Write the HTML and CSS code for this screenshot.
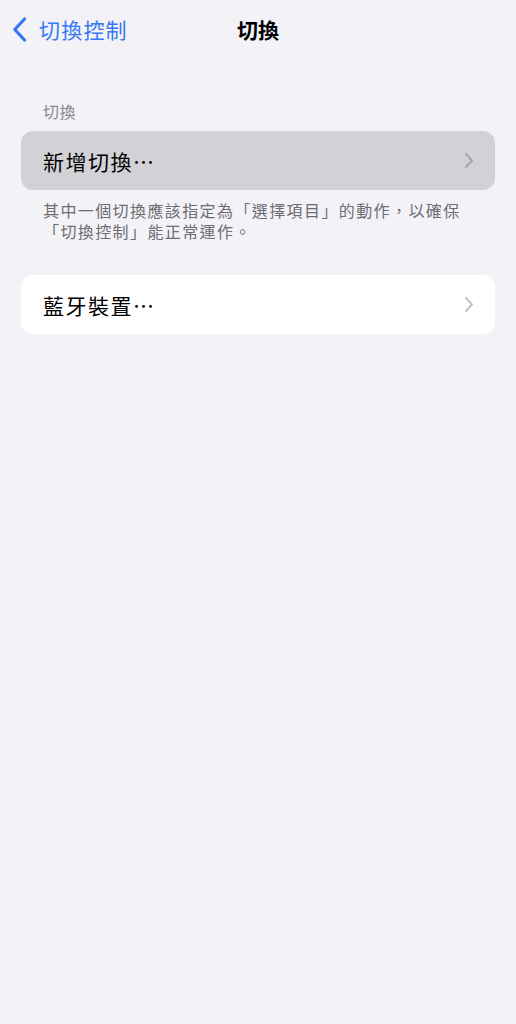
FILE: index.html
```html
<!DOCTYPE html>
<html lang="zh-Hant">
<head>
<meta charset="utf-8">
<link rel="stylesheet" href="styles.css">
</head>
<body>
<div class="screen">
  <header class="nav">
    <div class="back">
      <svg class="back-icon" width="15" height="25" viewBox="0 0 15 25"><path d="M12.5 2 L2.8 12.5 L12.5 23" fill="none" stroke="#3478f6" stroke-width="3.2" stroke-linecap="round" stroke-linejoin="round"/></svg>
      <span class="back-label">切換控制</span>
    </div>
    <div class="title">切換</div>
  </header>

  <section class="group first">
    <div class="group-header">切換</div>
    <div class="card highlighted">
      <div class="row">
        <span class="row-label">新增切換⋯</span>
        <svg class="chev" width="10" height="17" viewBox="0 0 10 17"><path d="M2 2 L8 8.5 L2 15" fill="none" stroke="#a8a8ad" stroke-width="2.2" stroke-linecap="round" stroke-linejoin="round"/></svg>
      </div>
    </div>
    <div class="group-footer">其中一個切換應該指定為「選擇項目」的動作，以確保「切換控制」能正常運作。</div>
  </section>

  <section class="group second">
    <div class="card">
      <div class="row">
        <span class="row-label">藍牙裝置⋯</span>
        <svg class="chev" width="10" height="17" viewBox="0 0 10 17"><path d="M2 2 L8 8.5 L2 15" fill="none" stroke="#c4c4c7" stroke-width="2.2" stroke-linecap="round" stroke-linejoin="round"/></svg>
      </div>
    </div>
  </section>
</div>
</body>
</html>
```

FILE: styles.css
```css
* { box-sizing: border-box; }
html, body { margin: 0; padding: 0; }
body {
  background: #f2f2f7;
  font-family: "Noto Sans CJK TC", "Noto Sans CJK SC", "Noto Sans", sans-serif;
  width: 516px;
  height: 1024px;
}
.screen { padding: 0 21px; }
.nav {
  position: relative;
  height: 58px;
  display: flex;
  align-items: center;
}
.back {
  display: flex;
  align-items: center;
  gap: 12px;
  margin-left: -9px;
  color: #3478f6;
}
.back-icon { display: block; }
.back-label { font-size: 21px; line-height: 1; letter-spacing: 1.2px; }
.title {
  position: absolute;
  left: 0; right: 0;
  top: 0; bottom: 0;
  display: flex;
  align-items: center;
  justify-content: center;
  font-size: 21px;
  font-weight: 700;
  color: #000;
  pointer-events: none;
}
.group.first { margin-top: 43px; }
.group.second { margin-top: 33px; }
.group-header {
  padding-left: 22px;
  font-size: 16px;
  line-height: 20px;
  letter-spacing: 0.5px;
  color: #8a8a8e;
  margin-bottom: 10px;
}
.card {
  background: #fff;
  border-radius: 12px;
  overflow: hidden;
}
.card.highlighted { background: #d1d1d6; }
.row {
  height: 59px;
  display: flex;
  align-items: center;
  justify-content: space-between;
  padding: 0 22px;
}
.row-label { font-size: 21px; color: #000; letter-spacing: 1.5px; }
.chev { display: block; margin-right: -1px; }
.group-footer {
  padding: 10px 22px 0 22px;
  font-size: 16px;
  line-height: 21px;
  letter-spacing: 1.4px;
  color: #6d6d72;
}
```
